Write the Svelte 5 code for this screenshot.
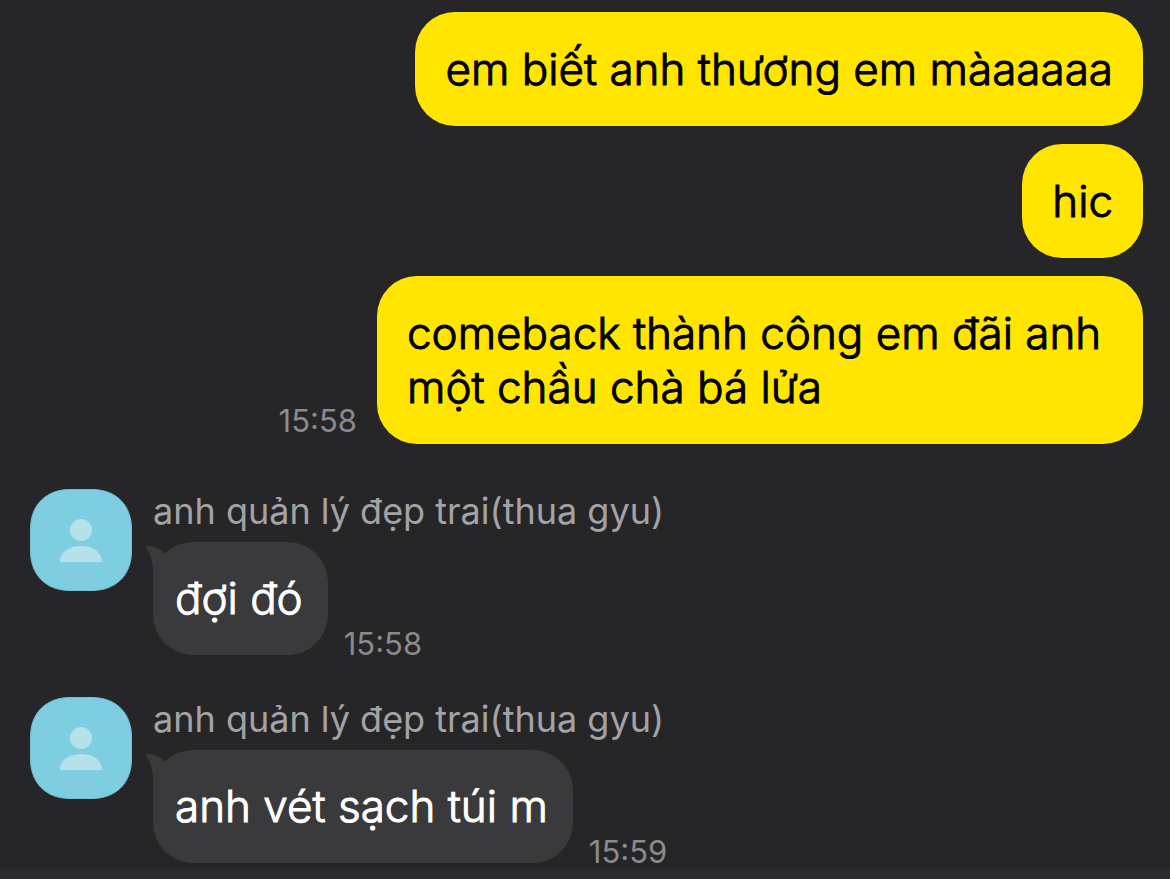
<script>
    const sent = [
        { text: "em biết anh thương em màaaaaa" },
        { text: "hic" },
        { text: "comeback thành công em đãi anh một chầu chà bá lửa", time: "15:58" },
    ];

    const received = [
        { name: "anh quản lý đẹp trai(thua gyu)", text: "đợi đó", time: "15:58" },
        { name: "anh quản lý đẹp trai(thua gyu)", text: "anh vét sạch túi m", time: "15:59" },
    ];
</script>

<main class="chat">
    <section class="sent">
        {#each sent as message}
            <div class="row">
                {#if message.time}
                    <time>{message.time}</time>
                {/if}
                <p class="bubble">{message.text}</p>
            </div>
        {/each}
    </section>

    <section class="received">
        {#each received as message}
            <article class="message">
                <svg class="avatar" viewBox="0 0 102 102" aria-hidden="true">
                    <path
                        d="M40 .5H62C87 .5 101.500 17 101.500 40V62C101.500 87 85 101.500 62 101.500H40C15 101.500 .5 85 .5 62V40C.5 15 17 .5 40 .5Z"
                        fill="#7fcde0"
                        stroke="#74bfd0"
                    />
                    <circle cx="51" cy="41" r="11" fill="#b5e2ea" />
                    <path d="M30 73c0-10 9-16 21-16s21 6 21 16Z" fill="#b5e2ea" />
                </svg>
                <div class="body">
                    <h2 class="name">{message.name}</h2>
                    <div class="row">
                        <p class="bubble">
                            <svg class="tail" viewBox="0 0 30 46" aria-hidden="true">
                                <path d="M0 4C8 3 14 6 20 12L28 20 8 46V28C8 19 5 11 0 4Z" fill="#3a3a3c" />
                            </svg>
                            {message.text}
                        </p>
                        <time>{message.time}</time>
                    </div>
                </div>
            </article>
        {/each}
    </section>
    <footer></footer>
</main>

<style>
    :global(body) {
        margin: 0;
        background: #262628;
    }

    .chat {
        font-family: Inter, sans-serif;
        overflow: hidden;
    }

    .sent {
        display: flex;
        flex-direction: column;
        gap: 18px;
        padding: 12px 27px 0;
    }

    .row {
        display: flex;
        align-items: flex-end;
    }

    .sent .row {
        justify-content: flex-end;
        gap: 20px;
    }

    .bubble {
        position: relative;
        box-sizing: border-box;
        margin: 0;
        padding: 30px;
        border-radius: 40px;
        font-size: 44px;
        font-weight: 300;
        line-height: 54px;
        -webkit-text-stroke: 1px currentColor;
    }

    .sent .bubble {
        max-width: 766px;
        background: #ffe500;
        color: #000;
    }

    .received {
        display: flex;
        flex-direction: column;
        gap: 42px;
        padding: 45px 30px 0;
    }

    .message {
        display: flex;
        align-items: flex-start;
        gap: 21px;
    }

    .avatar {
        flex: none;
        width: 102px;
        height: 102px;
    }

    .name {
        margin: 0 0 9px;
        color: #a3a3a5;
        font-size: 36px;
        font-weight: 400;
        line-height: 44px;
    }

    .received .row {
        gap: 16px;
    }

    .received .bubble {
        padding: 29px 25px 30px 22px;
        background: #3a3a3c;
        color: #fff;
    }

    .tail {
        position: absolute;
        top: 0;
        left: -8px;
        width: 30px;
        height: 46px;
    }

    time {
        color: #8b8b8d;
        font-size: 31px;
        line-height: 46px;
    }

    .received time {
        line-height: 22px;
    }

    footer {
        height: 11px;
        margin-top: 5px;
        background: #2b2a2d;
    }
</style>
